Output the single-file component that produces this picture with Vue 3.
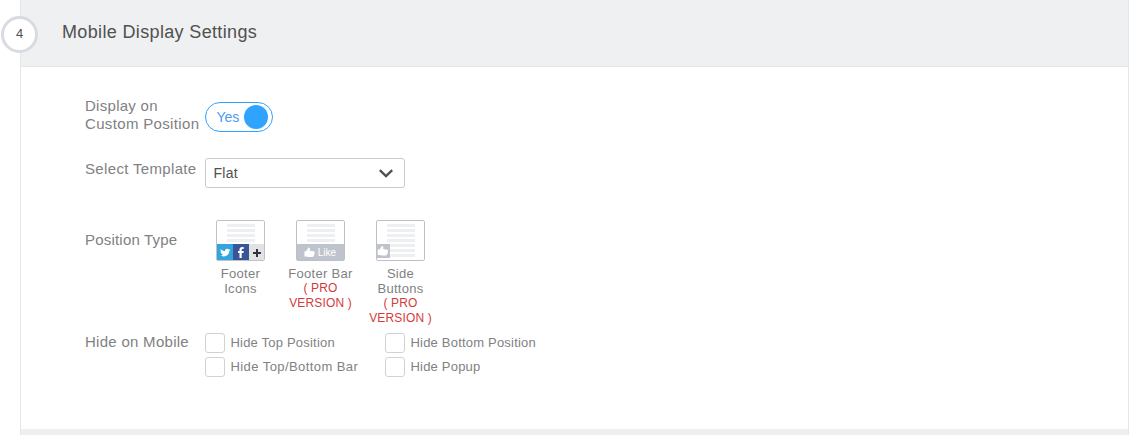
<script setup>
import { ref } from 'vue'

const enabled = ref(true)
const template = ref('Flat')
const options = [
  { text: 'Hide Top Position', cls: 'o1' },
  { text: 'Hide Bottom Position', cls: 'o2' },
  { text: 'Hide Top/Bottom Bar', cls: 'o3' },
  { text: 'Hide Popup', cls: 'o4' },
]
</script>

<template>
  <main class="page">
    <section class="panel">
      <header class="head">
        <span class="step">4</span>
        <h2>Mobile Display Settings</h2>
      </header>
      <div class="body">
        <div class="row r-display">
          <div class="label">Display on<br /><span class="l-custom">Custom Position</span></div>
          <button class="toggle" @click="enabled = !enabled"><span>Yes</span><i></i></button>
        </div>
        <div class="row r-template">
          <div class="label l-template">Select Template</div>
          <div class="select">
            <span>{{ template }}</span>
            <svg width="14" height="9" viewBox="0 0 14 9"><path d="M.8 1.2 7 7.2 13.2 1.2" fill="none" stroke="#50504f" stroke-width="2.3" /></svg>
          </div>
        </div>
        <div class="row r-type">
          <div class="label l-type">Position Type</div>
          <div class="types">
            <div class="type">
              <svg width="50" height="42" viewBox="0 0 50 42">
                <rect x=".5" y=".5" width="48" height="40" rx="1.5" fill="#fff" stroke="#bfc2cc" />
                <path d="M11 5.5h28M11 10.5h28M11 15.5h28M11 20.5h28" stroke="#eeeff1" stroke-width="3" />
                <path d="M1 24h16v16H1z" fill="#34a5dc" />
                <path d="M17 24h16v16H17z" fill="#3a5597" />
                <path d="M33 24h15v16H33z" fill="#e2e2e3" />
                <path d="M4.7 29c1.3 1.4 2.7 2 4.3 2 0-2 2.2-3 3.6-1.7l1.2-.4-.5 1 1-.1-1 1.1c0 4.3-4.6 6.9-9 4.7 1.1 0 2-.3 2.8-.9-1.1-.2-1.6-.8-1.8-1.4h.8c-1.1-.5-1.6-1.2-1.6-2.1l.8.2c-.8-.8-1-1.6-.6-2.4z" fill="#fff" />
                <path d="M23.5 38v-5H22v-2h1.5v-1.2c0-2 1.1-3.1 4.2-2.7v2h-1.1c-.8 0-.9.4-.9.9v1h2l-.2 2h-1.8v5z" fill="#fff" />
                <path d="M41 29v8M37 33h8" stroke="#34303e" stroke-width="2" />
              </svg>
              <div class="name">Footer<br />Icons</div>
            </div>
            <div class="type">
              <svg width="50" height="42" viewBox="0 0 50 42">
                <rect x=".5" y=".5" width="48" height="40" rx="1.5" fill="#fff" stroke="#bcc0c9" />
                <path d="M11 5.5h28M11 10.5h28M11 15.5h28M11 20.5h28" stroke="#eeeff1" stroke-width="3" />
                <path d="M1 24h47v16H1z" fill="#bfc4cc" />
                <path d="M8.5 31.2h1.6l2.3-3.7c1.7.2 1.9 1.1 1.3 3.3l4.3.5c.9.2.9 1 .3 1.4.6.5.5 1.2-.1 1.5.3.6.1 1.1-.5 1.4.1.8-.4 1.3-1.3 1.5h-4.2l-1.8-.6H8.5z" fill="#fff" />
                <text x="21.8" y="36" textLength="18.5" fill="#fff" class="like">Like</text>
              </svg>
              <div class="name">Footer Bar<em>( PRO<br />VERSION )</em></div>
            </div>
            <div class="type">
              <svg width="50" height="42" viewBox="0 0 50 42">
                <rect x=".5" y=".5" width="48" height="40" rx="1.5" fill="#fff" stroke="#bcc0c9" />
                <path d="M11 5.5h28M11 10.5h28M11 15.5h28M11 20.5h28M11 25.5h28M11 30.5h28M11 35.5h28" stroke="#eeeff1" stroke-width="3" />
                <path d="M1 24h13v14H1z" fill="#bfc4cc" />
                <path d="M1.7 29.5h1.9l2.2-3.4c1.7.2 1.9 1.1 1.3 3l4.3.6c.9.2.9 1 .3 1.4.6.5.5 1.2-.1 1.5.3.6.1 1.1-.5 1.4.1.8-.4 1.3-1.3 1.5H5.6l-1.8-.6H1.7z" fill="#fff" />
              </svg>
              <div class="name">Side<br />Buttons<em>( PRO<br />VERSION )</em></div>
            </div>
          </div>
        </div>
        <div class="row">
          <div class="label l-hide">Hide on Mobile</div>
          <div class="checks">
            <label v-for="o in options" :key="o.text" class="check" :class="o.cls"><i></i><span>{{ o.text }}</span></label>
          </div>
        </div>
      </div>
      <div class="strip"></div>
    </section>
  </main>
</template>

<style>
body { background: #fff; overflow: hidden; }
</style>

<style scoped>
* { box-sizing: border-box; }
.page { padding: 0 18px 0 20px; height: 435px; font-family: "Liberation Sans", Arial, sans-serif; color: #7f8183; }
.panel { height: 435px; border: solid #e3e6ea; border-width: 0 1px; display: flex; flex-direction: column; }
.head { height: 67px; background: #eef0f2; border-bottom: 1px solid #e3e6ea; position: relative; padding: 20px 0 0 41px; }
h2 { margin: 0; font-size: 18px; line-height: 24px; font-weight: 400; color: #50504f; letter-spacing: .35px; }
.step { position: absolute; left: -20px; top: 16px; width: 37px; height: 37px; border: 3px solid #d8dbe2; border-radius: 50%; background: #fff; font-size: 13px; line-height: 30px; text-align: center; color: #50504f; }
.body { flex: 1; padding: 30px 0 0 64px; }
.row { display: grid; grid-template-columns: 120px auto; align-items: start; justify-content: start; }
.r-display { height: 61px; }
.r-template { height: 62px; }
.r-type { height: 112px; }
.label { font-size: 15px; line-height: 18px; letter-spacing: .28px; white-space: nowrap; }
.l-custom, .l-template { letter-spacing: .34px; }
.l-template { padding-top: 2px; }
.l-type { padding-top: 11px; letter-spacing: .2px; }
.l-hide { padding-top: 1px; }
.toggle { margin-top: 5px; width: 68px; height: 30px; border: 1px solid #2ea3ff; border-radius: 15px; background: #fff; display: flex; align-items: center; justify-content: space-between; padding: 0 4px 0 10.5px; font: 14px "Liberation Sans", Arial, sans-serif; color: #4a9cf0; }
.toggle i { width: 24px; height: 24px; border-radius: 50%; background: #2ea3ff; }
.select { width: 200px; height: 30px; border: 1px solid #c9cacc; border-radius: 3px; display: flex; align-items: center; justify-content: space-between; padding: 0 11px 0 7.5px; font-size: 14px; letter-spacing: .3px; color: #50504f; }
.types { display: flex; margin-left: -4px; }
.type { width: 80px; font-size: 13px; line-height: 15px; text-align: center; letter-spacing: .3px; white-space: nowrap; }
.type svg { display: block; margin: 0 auto 4px; }
.name { padding-right: 1px; }
.type em { display: block; font-style: normal; font-size: 12px; color: #d63a3a; letter-spacing: .15px; }
.like { font: 10px "Liberation Sans", Arial, sans-serif; }
.checks { display: grid; grid-template-columns: 180px 180px; row-gap: 4px; margin-top: 1px; }
.check { display: flex; align-items: center; height: 20px; font-size: 13px; letter-spacing: .2px; white-space: nowrap; }
.check span { line-height: 16px; }
.check i { width: 20px; height: 20px; border: 1px solid #cdd3d6; border-radius: 3px; margin-right: 5.5px; }
.o3 { letter-spacing: .42px; }
.strip { height: 6px; background: #eeeff0; }
</style>
